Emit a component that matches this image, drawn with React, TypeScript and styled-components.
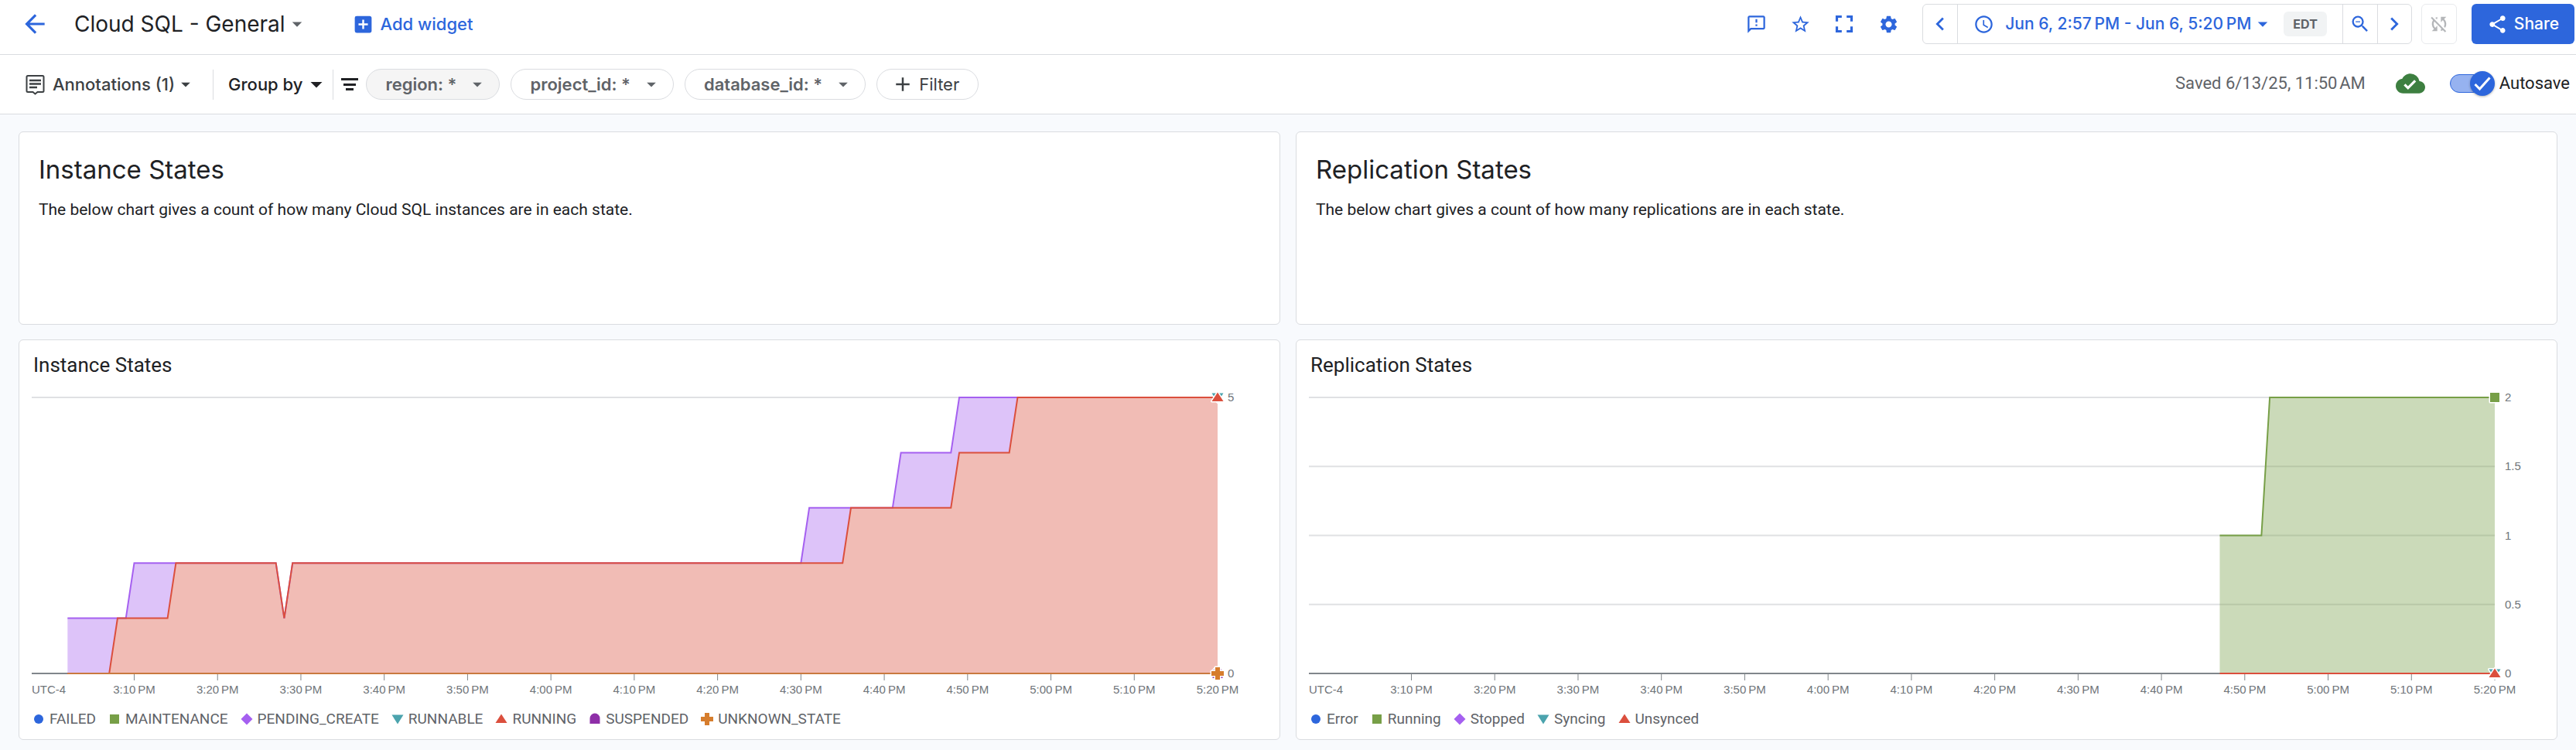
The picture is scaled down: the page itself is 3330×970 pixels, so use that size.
import React, { useLayoutEffect, useRef, useState } from "react";
import styled, { createGlobalStyle } from "styled-components";
import {
  MdAccessTime,
  MdAdd,
  MdAddBox,
  MdArrowBack,
  MdArrowDropDown,
  MdChevronLeft,
  MdChevronRight,
  MdCloudDone,
  MdFullscreen,
  MdOutlineFeedback,
  MdSettings,
  MdShare,
  MdStarBorder,
  MdSyncDisabled,
  MdZoomOut,
} from "react-icons/md";

const BLUE = "#2d66dc";
const INK = "#202124";
const MUTED = "#5f6368";
const LINE = "#dadce0";
const BRAND = 'Inter, "Liberation Sans", sans-serif';
const BODY = 'Roboto, "Liberation Sans", sans-serif';
const AXIS = '"Liberation Sans", Arial, sans-serif';

const GlobalStyle = createGlobalStyle`
  *, *::before, *::after { box-sizing: border-box; }
  body {
    margin: 0;
    background: #f8fafd;
    color: ${INK};
    font-family: ${BODY};
  }
  button { font: inherit; color: inherit; background: none; border: 0; padding: 0; margin: 0; cursor: pointer; }
  svg { display: block; flex: none; }
`;

/* ---------- header bars ---------- */

const Bar = styled.div`
  display: flex;
  align-items: center;
  background: #fff;
  border-bottom: 1px solid ${LINE};
  font-family: ${BRAND};
  font-size: 22px;
  line-height: 28px;
  white-space: nowrap;
`;

const TitleBar = styled(Bar)`
  padding: 5px 2px 13px 25px;
`;

const FilterBar = styled(Bar)`
  padding: 18px 8px 18px 32px;
`;

const Spacer = styled.div`
  flex: 1;
`;

const IconButton = styled.button<{ $width?: number }>`
  display: flex;
  align-items: center;
  justify-content: center;
  width: ${(p) => p.$width ?? 40}px;
  height: 50px;
  color: ${BLUE};
`;

const TitleHeading = styled.h1`
  margin: 0 0 0 31px;
  font-size: 28px;
  font-weight: 400;
  line-height: 36px;
`;

const TitleButton = styled.button`
  display: flex;
  align-items: center;
  svg { color: ${MUTED}; }
`;

const AddWidget = styled.button`
  display: flex;
  align-items: center;
  gap: 8px;
  margin-left: 56px;
  color: ${BLUE};
  font-weight: 500;
`;

const Tools = styled.div`
  display: flex;
  gap: 17px;
  margin-right: 24px;
`;

const RangeGroup = styled.div`
  display: flex;
  height: 52px;
  border: 1px solid ${LINE};
  border-radius: 6px;
  > * + * { border-left: 1px solid ${LINE}; }
`;

const RangeButton = styled.button`
  display: flex;
  align-items: center;
  padding: 0 20px;
  color: ${BLUE};
  font-size: 21px;
  font-weight: 500;
`;

const RangeText = styled.span`
  margin-left: 14px;
`;

const Zone = styled.span`
  margin-left: 12px;
  padding: 0 12px;
  border-radius: 6px;
  background: #f1f3f4;
  color: ${MUTED};
  font-size: 16px;
  font-weight: 700;
  line-height: 32px;
`;

const RefreshButton = styled.button`
  display: flex;
  align-items: center;
  justify-content: center;
  width: 46px;
  height: 52px;
  margin: 0 19px 0 12px;
  border: 1px solid #e8eaed;
  border-radius: 6px;
  color: #b4b6b9;
`;

const ShareButton = styled.button`
  display: flex;
  align-items: center;
  gap: 8px;
  height: 52px;
  padding: 0 20px;
  border-radius: 6px;
  background: ${BLUE};
  color: #fff;
  font-size: 21px;
  font-weight: 500;
`;

const MenuButton = styled.button<{ $color: string }>`
  display: flex;
  align-items: center;
  color: ${(p) => p.$color};
  font-weight: 500;
`;

const MenuLabel = styled.span`
  margin-left: 9px;
`;

const Divider = styled.div`
  width: 1px;
  height: 39px;
  margin: 0 10px 0 21px;
  background: ${LINE};
`;

const ThinDivider = styled(Divider)`
  margin: 0 9px 0 3px;
`;

const GroupLabel = styled.span`
  margin-left: 9px;
`;

const Pills = styled.div`
  display: flex;
  gap: 14px;
  margin-left: 9px;
`;

const Pill = styled.button<{ $filled?: boolean }>`
  display: flex;
  align-items: center;
  gap: 13px;
  height: 40px;
  padding: 0 14px 0 24px;
  border: 1px solid ${LINE};
  border-radius: 20px;
  background: ${(p) => (p.$filled ? "#f5f5f5" : "#fff")};
  color: ${MUTED};
  font-weight: 600;
`;

const AddFilter = styled(Pill)`
  gap: 6px;
  padding: 0 24px 0 18px;
  color: #3c4043;
  font-weight: 400;
`;

const Status = styled.div`
  display: flex;
  align-items: center;
  margin-bottom: 2px;
  font-family: ${BODY};
`;

const SavedText = styled.span`
  margin-right: 39px;
  color: ${MUTED};
`;

const CloudSaved = styled(MdCloudDone)`
  margin-right: 32px;
  color: #3d7f40;
`;

const AutosaveLabel = styled.label`
  display: flex;
  align-items: center;
  gap: 6px;
  cursor: pointer;
`;

const Switch = styled.span`
  position: relative;
  display: flex;
  align-items: center;
  width: 58px;
  height: 32px;
`;

const SwitchInput = styled.input`
  appearance: none;
  width: 54px;
  height: 24px;
  margin: 0;
  border: 1px solid ${BLUE};
  border-radius: 12px;
  background: #96b2f0;
`;

const SwitchKnob = styled.span`
  position: absolute;
  top: 0;
  right: 0;
  display: flex;
  align-items: center;
  justify-content: center;
  width: 32px;
  height: 32px;
  border-radius: 50%;
  background: ${BLUE};
  box-shadow: 0 1px 3px rgba(60, 64, 67, 0.4);
  pointer-events: none;
`;

/* ---------- dashboard grid ---------- */

const Grid = styled.main`
  display: grid;
  grid-template-columns: repeat(2, minmax(0, 1fr));
  gap: 19px 20px;
  padding: 22px 24px 13px;
`;

const Card = styled.section`
  border: 1px solid ${LINE};
  border-radius: 6px;
  background: #fff;
`;

const TextCard = styled(Card)`
  min-height: 250px;
  padding: 26px 25px;
`;

const TextHeading = styled.h2`
  margin: 0 0 16px;
  font-family: ${BRAND};
  font-size: 33px;
  font-weight: 400;
  line-height: 44px;
`;

const TextBody = styled.p`
  margin: 0;
  font-size: 21px;
  line-height: 28px;
`;

const ChartCard = styled(Card)`
  padding: 16px 0 13px;
`;

const ChartTitle = styled.h3`
  margin: 0;
  padding: 0 18px;
  font-size: 26px;
  font-weight: 400;
  line-height: 32px;
`;

const ChartArea = styled.div`
  height: 429px;
  overflow: hidden;
`;

const AxisText = styled.text`
  font-family: ${AXIS};
  font-size: 15px;
  fill: #70757a;
`;

const Legend = styled.ul`
  display: flex;
  flex-wrap: wrap;
  gap: 4px 16px;
  margin: 0;
  padding: 0 17px;
  list-style: none;
  color: ${MUTED};
  font-size: 19px;
  line-height: 26px;
`;

const LegendItem = styled.li`
  display: flex;
  align-items: center;
  gap: 6px;
`;

/* ---------- icons ---------- */

const AnnotationIcon = () => (
  <svg width="27" height="27" viewBox="0 0 27 27" fill="none" stroke="currentColor" strokeWidth="2">
    <path d="M4 2h19a1.500 1.500 0 0 1 1.500 1.500v18a1.500 1.500 0 0 1-1.500 1.500h-6.500l-3 2.500-3-2.500H4a1.500 1.500 0 0 1-1.500-1.500v-18A1.500 1.500 0 0 1 4 2z" />
    <path d="M6 8h15M6 12.500h15M6 17h10" strokeWidth="2.500" />
  </svg>
);

const FilterIcon = () => (
  <svg width="24" height="18" viewBox="0 0 24 18" fill="currentColor" aria-hidden="true">
    <path d="M1 1h22v3H1zM4 8h16v3H4zM7 14h10v3H7z" />
  </svg>
);

type Shape = "circle" | "square" | "diamond" | "down" | "up" | "arch" | "plus";

const COLORS: Record<Shape, string> = {
  circle: BLUE,
  square: "#779f47",
  diamond: "#a560f0",
  down: "#4ba3ad",
  up: "#db4f3d",
  arch: "#8e2fa8",
  plus: "#d67d2d",
};

const PATHS: Record<Shape, string> = {
  circle: "M-6 0a6 6 0 1 0 12 0a6 6 0 1 0-12 0z",
  square: "M-6-6H6V6H-6z",
  diamond: "M0-7.500L7.500 0L0 7.500L-7.500 0z",
  down: "M-7.500-5.500H7.500L0 6.500z",
  up: "M-7.500 5H7.500L0-6.500z",
  arch: "M-6.500 6V-1a6.500 6.500 0 0 1 13 0V6z",
  plus: "M-3-8H3V-3H8V3H3V8H-3V3H-8V-3H-3z",
};

const Marker = ({ shape }: { shape: Shape }) => (
  <svg width="16" height="16" viewBox="-8 -8 16 16" aria-hidden="true">
    <path d={PATHS[shape]} fill={COLORS[shape]} />
  </svg>
);

/* ---------- charts ---------- */

type Point = [minute: number, value: number];

interface Area {
  shape: Shape;
  points: Point[];
  base?: Point[];
}

interface ChartProps {
  label: string;
  max: number;
  ticks: number[];
  areas: Area[];
  zeroLine: { from: number; color: string };
  ends: { shape: Shape; value: number }[];
}

/* Minutes are counted from 3:00 PM. */
const START = -2.3;
const END = 140;
const TIMES = Array.from({ length: 14 }, (_, i) => {
  const minute = (i + 1) * 10;
  const hour = 3 + Math.floor(minute / 60);
  return { minute, text: `${hour}:${String(minute % 60).padStart(2, "0")}\u202fPM` };
});

const LEFT = 16;
const RIGHT = 80;
const TOP = 26;
const BOTTOM = 383;

function Chart({ label, max, ticks, areas, zeroLine, ends }: ChartProps) {
  const host = useRef<HTMLDivElement>(null);
  const [width, setWidth] = useState(1200);

  useLayoutEffect(() => {
    const node = host.current;
    if (!node) return;
    const measure = () => setWidth(node.clientWidth);
    measure();
    const observer = new ResizeObserver(measure);
    observer.observe(node);
    return () => observer.disconnect();
  }, []);

  const right = width - RIGHT;
  const x = (m: number) => LEFT + ((m - START) / (END - START)) * (right - LEFT);
  const y = (v: number) => BOTTOM - (v / max) * (BOTTOM - TOP);
  const line = (pts: Point[]) => pts.map(([m, v]) => `${x(m)},${y(v)}`).join(" ");

  return (
    <ChartArea ref={host}>
      <svg width={width} height="429" role="img" aria-label={label}>
        {ticks.map((t) => (
          <line key={t} x1={LEFT} x2={right} y1={y(t)} y2={y(t)} stroke={t ? "#e0e1e3" : "#80868b"} strokeWidth="2" />
        ))}
        {TIMES.map(({ minute }) => (
          <line key={minute} x1={x(minute)} x2={x(minute)} y1={BOTTOM} y2={BOTTOM + 9} stroke="#80868b" strokeWidth="1" />
        ))}
        {areas.map(({ shape, points, base }) => {
          const floor: Point[] = base ?? [
            [points[0][0], 0],
            [END, 0],
          ];
          return (
            <polygon
              key={shape}
              points={line([...points, ...[...floor].reverse()])}
              fill={COLORS[shape]}
              fillOpacity="0.380"
            />
          );
        })}
        {areas.map(({ shape, points }) => (
          <polyline key={shape} points={line(points)} fill="none" stroke={COLORS[shape]} strokeWidth="2" />
        ))}
        <line x1={x(zeroLine.from)} x2={right} y1={BOTTOM} y2={BOTTOM} stroke={zeroLine.color} strokeWidth="2" />
        {ends.map(({ shape, value }, i) => (
          <path
            key={i}
            d={PATHS[shape]}
            transform={`translate(${right} ${y(value)})`}
            fill={COLORS[shape]}
            stroke="#fff"
            strokeWidth="3"
            strokeLinejoin="round"
            paintOrder="stroke"
          />
        ))}
        {ticks.map((t) => (
          <AxisText key={t} x={right + 13} y={y(t) + 5}>
            {t}
          </AxisText>
        ))}
        <AxisText x={LEFT} y={BOTTOM + 26}>
          UTC-4
        </AxisText>
        {TIMES.map(({ minute, text }) => (
          <AxisText key={minute} x={x(minute)} y={BOTTOM + 26} textAnchor="middle">
            {text}
          </AxisText>
        ))}
      </svg>
    </ChartArea>
  );
}

const RUNNING: Point[] = [
  [2, 0], [7, 0], [8, 1], [14, 1], [15, 2], [27, 2], [28, 1], [29, 2], [95, 2], [96, 3],
  [108, 3], [109, 4], [115, 4], [116, 5], [140, 5],
];

const PENDING: Point[] = [
  [2, 1], [9, 1], [10, 2], [27, 2], [28, 1], [29, 2], [90, 2], [91, 3], [101, 3], [102, 4],
  [108, 4], [109, 5], [140, 5],
];

const REPLICAS: Point[] = [
  [107, 1], [112, 1], [113, 2], [140, 2],
];

const INSTANCE_LEGEND: [Shape, string][] = [
  ["circle", "FAILED"],
  ["square", "MAINTENANCE"],
  ["diamond", "PENDING_CREATE"],
  ["down", "RUNNABLE"],
  ["up", "RUNNING"],
  ["arch", "SUSPENDED"],
  ["plus", "UNKNOWN_STATE"],
];

const REPLICATION_LEGEND: [Shape, string][] = [
  ["circle", "Error"],
  ["square", "Running"],
  ["diamond", "Stopped"],
  ["down", "Syncing"],
  ["up", "Unsynced"],
];

function ChartWidget({
  title,
  legend,
  ...chart
}: { title: string; legend: [Shape, string][] } & Omit<ChartProps, "label">) {
  return (
    <ChartCard>
      <ChartTitle>{title}</ChartTitle>
      <Chart label={title} {...chart} />
      <Legend>
        {legend.map(([shape, name]) => (
          <LegendItem key={name}>
            <Marker shape={shape} />
            {name}
          </LegendItem>
        ))}
      </Legend>
    </ChartCard>
  );
}

export default function App() {
  const [autosave, setAutosave] = useState(true);

  return (
    <>
      <GlobalStyle />
      <header>
        <TitleBar>
          <IconButton aria-label="Back">
            <MdArrowBack size={38} />
          </IconButton>
          <TitleHeading>
            <TitleButton aria-haspopup="menu">
              Cloud SQL - General
              <MdArrowDropDown size={30} />
            </TitleButton>
          </TitleHeading>
          <AddWidget>
            <MdAddBox size={29} />
            Add widget
          </AddWidget>
          <Spacer />
          <Tools>
            <IconButton aria-label="Send feedback">
              <MdOutlineFeedback size={27} />
            </IconButton>
            <IconButton aria-label="Star dashboard">
              <MdStarBorder size={27} />
            </IconButton>
            <IconButton aria-label="Full screen">
              <MdFullscreen size={38} />
            </IconButton>
            <IconButton aria-label="Settings">
              <MdSettings size={27} />
            </IconButton>
          </Tools>
          <RangeGroup>
            <IconButton $width={44} aria-label="Earlier">
              <MdChevronLeft size={34} />
            </IconButton>
            <RangeButton aria-haspopup="dialog">
              <MdAccessTime size={27} />
              <RangeText>{"Jun 6, 2:57\u202fPM - Jun 6, 5:20\u202fPM"}</RangeText>
              <MdArrowDropDown size={30} />
              <Zone>EDT</Zone>
            </RangeButton>
            <IconButton $width={45} aria-label="Zoom out">
              <MdZoomOut size={28} />
            </IconButton>
            <IconButton $width={44} aria-label="Later">
              <MdChevronRight size={34} />
            </IconButton>
          </RangeGroup>
          <RefreshButton aria-label="Auto refresh off">
            <MdSyncDisabled size={28} />
          </RefreshButton>
          <ShareButton>
            <MdShare size={27} />
            Share
          </ShareButton>
        </TitleBar>

        <FilterBar>
          <MenuButton $color="#3c4043" aria-haspopup="menu">
            <AnnotationIcon />
            <MenuLabel>Annotations (1)</MenuLabel>
            <MdArrowDropDown size={28} />
          </MenuButton>
          <Divider />
          <MenuButton $color={INK} aria-haspopup="menu">
            <GroupLabel>Group by</GroupLabel>
            <MdArrowDropDown size={36} />
          </MenuButton>
          <ThinDivider />
          <FilterIcon />
          <Pills>
            <Pill $filled aria-haspopup="menu">
              region: *
              <MdArrowDropDown size={28} />
            </Pill>
            <Pill aria-haspopup="menu">
              project_id: *
              <MdArrowDropDown size={28} />
            </Pill>
            <Pill aria-haspopup="menu">
              database_id: *
              <MdArrowDropDown size={28} />
            </Pill>
            <AddFilter>
              <MdAdd size={30} />
              Filter
            </AddFilter>
          </Pills>
          <Spacer />
          <Status>
            <SavedText>{"Saved 6/13/25, 11:50\u202fAM"}</SavedText>
            <CloudSaved size={38} />
            <AutosaveLabel>
              <Switch>
                <SwitchInput type="checkbox" checked={autosave} onChange={(e) => setAutosave(e.target.checked)} />
                <SwitchKnob>
                  <svg width="24" height="24" viewBox="0 0 24 24" fill="none" stroke="#fff" strokeWidth="3">
                    <path d="M2.500 13l6 6L21.500 4.500" />
                  </svg>
                </SwitchKnob>
              </Switch>
              Autosave
            </AutosaveLabel>
          </Status>
        </FilterBar>
      </header>

      <Grid>
        <TextCard>
          <TextHeading>Instance States</TextHeading>
          <TextBody>The below chart gives a count of how many Cloud SQL instances are in each state.</TextBody>
        </TextCard>
        <TextCard>
          <TextHeading>Replication States</TextHeading>
          <TextBody>The below chart gives a count of how many replications are in each state.</TextBody>
        </TextCard>
        <ChartWidget
          title="Instance States"
          legend={INSTANCE_LEGEND}
          max={5}
          ticks={[0, 5]}
          areas={[
            { shape: "diamond", points: PENDING, base: RUNNING },
            { shape: "up", points: RUNNING },
          ]}
          zeroLine={{ from: 2, color: "#c9793f" }}
          ends={[
            { shape: "down", value: 5 },
            { shape: "up", value: 5 },
            { shape: "arch", value: 0 },
            { shape: "plus", value: 0 },
          ]}
        />
        <ChartWidget
          title="Replication States"
          legend={REPLICATION_LEGEND}
          max={2}
          ticks={[0, 0.5, 1, 1.5, 2]}
          areas={[{ shape: "square", points: REPLICAS }]}
          zeroLine={{ from: 107, color: COLORS.up }}
          ends={[
            { shape: "square", value: 2 },
            { shape: "down", value: 0 },
            { shape: "up", value: 0 },
          ]}
        />
      </Grid>
    </>
  );
}
